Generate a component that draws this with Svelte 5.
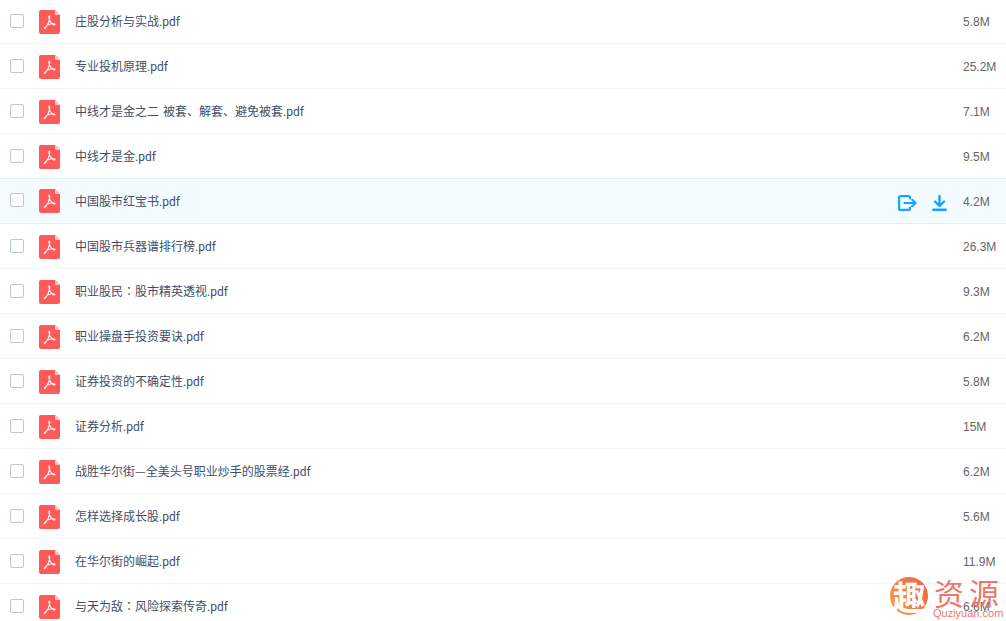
<script lang="ts">
    const files = [
        { name: ["庄股分析与实战.pdf"], size: "5.8M" },
        { name: ["专业投机原理.pdf"], size: "25.2M" },
        { name: ["中线才是金之二 被套、解套、避免被套.pdf"], size: "7.1M" },
        { name: ["中线才是金.pdf"], size: "9.5M" },
        { name: ["中国股市红宝书.pdf"], size: "4.2M", hover: true },
        { name: ["中国股市兵器谱排行榜.pdf"], size: "26.3M" },
        { name: ["职业股民", "：", "股市精英透视.pdf"], size: "9.3M" },
        { name: ["职业操盘手投资要诀.pdf"], size: "6.2M" },
        { name: ["证券投资的不确定性.pdf"], size: "5.8M" },
        { name: ["证券分析.pdf"], size: "15M" },
        { name: ["战胜华尔街", "—", "全美头号职业炒手的股票经.pdf"], size: "6.2M" },
        { name: ["怎样选择成长股.pdf"], size: "5.6M" },
        { name: ["在华尔街的崛起.pdf"], size: "11.9M" },
        { name: ["与天为敌", "：", "风险探索传奇.pdf"], size: "6.6M" }
    ];
</script>

<div class="page">
    <ul class="list">
        {#each files as file}
            <li class="row" class:hover={file.hover}>
                <span class="check"></span>
                <svg class="pdf" viewBox="0 0 21 24" width="21" height="24">
                    <path d="M2 0H16L21 5V22a2 2 0 0 1-2 2H2a2 2 0 0 1-2-2V2a2 2 0 0 1 2-2Z" fill="#ff5a5a" />
                    <path d="M16 0L21 5H17a1 1 0 0 1-1-1Z" fill="#ffc4c4" />
                    <path d="M9.8 6.2C10.6 6 10.9 7 10.7 8.4 10.4 10.8 8.4 15.4 6.2 18.2 5.6 18.9 5 18.5 5.5 17.8 7 15.8 10 14.2 12.2 13.8 13.6 13.5 16.2 13.7 16 14.6 15.8 15.3 14.4 15 13.5 14.3 11.8 13 9.4 8.4 9.8 6.2Z" fill="none" stroke="#ffeeee" stroke-width="1.1" stroke-linejoin="round" />
                </svg>
                <span class="name">{file.name[0]}{#if file.name[1]}<span class="sep">{file.name[1]}</span>{file.name[2]}{/if}</span>
                {#if file.hover}
                    <span class="actions">
                        <svg viewBox="0 0 19 16" width="19" height="16" fill="none" stroke="#14a5ff" stroke-width="2.2" stroke-linecap="round" stroke-linejoin="round">
                            <path d="M12 3.5V2.6A1.5 1.5 0 0 0 10.5 1.1H2.6A1.5 1.5 0 0 0 1.1 2.6V13.4A1.5 1.5 0 0 0 2.6 14.9H10.5A1.5 1.5 0 0 0 12 13.4V12.5" />
                            <path d="M6.5 8H17.5M14.2 4.8L17.6 8L14.2 11.2" />
                        </svg>
                        <svg viewBox="0 0 15 16" width="15" height="16" fill="none" stroke="#14a5ff" stroke-width="2.4" stroke-linecap="round" stroke-linejoin="round">
                            <path d="M7.5 1V10.5M3 6.5L7.5 10.8L12 6.5" />
                            <path d="M1.2 14.8H13.8" />
                        </svg>
                    </span>
                {/if}
                <span class="size">{file.size}</span>
            </li>
        {/each}
    </ul>

    <div class="mark">
        <span class="badge">趣</span>
        <div class="brand">
            <span class="cn">资源</span>
            <span class="en">Quziyuan.com</span>
        </div>
    </div>
</div>

<style>
    :global(body) {
        background: #fff;
    }

    .page {
        position: relative;
        height: 621px;
        overflow: hidden;
        font-family: "Liberation Sans", "Noto Sans CJK SC", sans-serif;
        font-size: 12px;
    }

    .list {
        list-style: none;
        margin: -1px 0 0;
        padding: 0;
    }

    .row {
        display: flex;
        align-items: center;
        box-sizing: border-box;
        height: 45px;
        padding: 0 17px 0 10px;
        border-bottom: 1px solid #f2f6fd;
    }

    .row.hover {
        height: 46px;
        margin-top: -1px;
        background: #f4fbff;
        border-top: 1px solid #daf0fd;
        border-bottom: 1px solid #daf0fd;
    }

    .check {
        flex: none;
        box-sizing: border-box;
        width: 14px;
        height: 14px;
        border: 1px solid #bcc8d8;
        border-radius: 2px;
        background: #fff;
        margin-top: -1px;
    }

    .row.hover .check {
        margin-top: -3px;
    }

    .pdf {
        flex: none;
        margin: 1px 0 0 15px;
    }

    .row.hover .pdf {
        margin-top: -1px;
    }

    .name {
        flex: 1;
        margin: -1px 0 0 15px;
        color: #424e67;
        font-family: Roboto, "Noto Sans CJK SC", sans-serif;
        word-spacing: 1px;
        white-space: nowrap;
    }

    .sep {
        font-family: "Noto Sans CJK TC", sans-serif;
    }

    .actions {
        display: flex;
        align-items: center;
        gap: 15px;
        margin: 3px 16px 0 0;
    }

    .size {
        flex: none;
        width: 26px;
        margin-top: 2px;
        color: #666;
        white-space: nowrap;
    }

    .mark {
        position: absolute;
        right: 4px;
        bottom: 2px;
        display: flex;
        gap: 5px;
    }

    .badge {
        display: flex;
        align-items: center;
        justify-content: center;
        width: 38px;
        height: 38px;
        border-radius: 50%;
        background: linear-gradient(60deg, #f5a13c, #ec6052);
        color: #fff;
        font-family: "Noto Sans CJK SC", sans-serif;
        font-size: 33px;
        font-weight: 700;
        line-height: 1;
    }

    .brand {
        display: flex;
        flex-direction: column;
        width: 69px;
        color: #ee7668;
    }

    .cn {
        font-family: "Noto Sans CJK SC", sans-serif;
        font-size: 30px;
        line-height: 30px;
        letter-spacing: 5px;
        padding-left: 1px;
        white-space: nowrap;
    }

    .en {
        font-size: 11px;
        line-height: 12px;
        white-space: nowrap;
    }
</style>
